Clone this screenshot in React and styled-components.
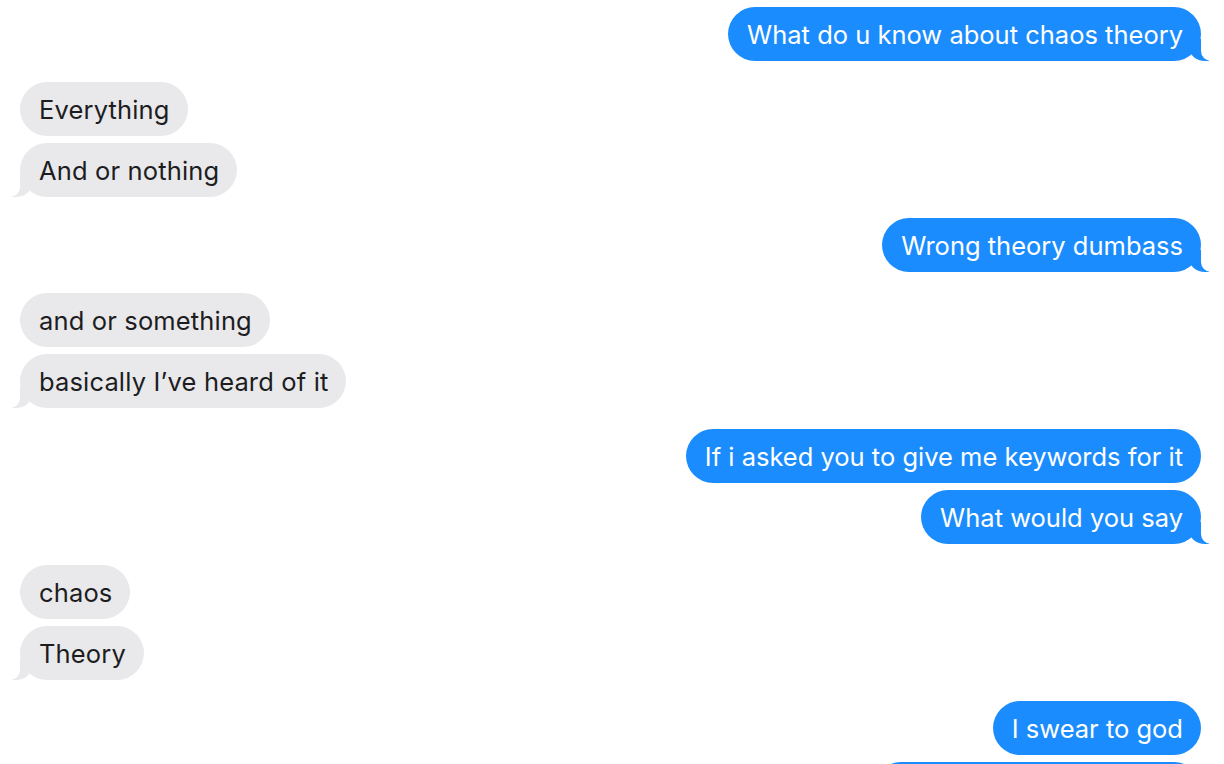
import React from "react";
import styled, { createGlobalStyle, css } from "styled-components";

const GlobalStyle = createGlobalStyle`
  html, body {
    margin: 0;
    padding: 0;
    background: #fff;
    overflow: hidden;
  }
  body {
    font-family: Inter, "Helvetica Neue", "Liberation Sans", sans-serif;
  }
`;

const Thread = styled.div`
  display: flex;
  flex-direction: column;
  padding: 7px 23px 0 20px;
  height: 764px;
  box-sizing: border-box;
`;

const Group = styled.div`
  display: flex;
  flex-direction: column;
  align-items: ${(p) => (p.$sent ? "flex-end" : "flex-start")};
  gap: 7px;
  & + & {
    margin-top: 21px;
  }
`;

const tailSent = css`
  &::before {
    content: "";
    position: absolute;
    z-index: 0;
    bottom: 0;
    right: -8px;
    width: 20px;
    height: 22px;
    background: #1b8cfe;
    border-bottom-left-radius: 16px 14px;
  }
  &::after {
    content: "";
    position: absolute;
    z-index: 1;
    bottom: 0;
    right: -14px;
    width: 14px;
    height: 22px;
    background: #fff;
    border-bottom-left-radius: 10px;
  }
`;

const tailReceived = css`
  &::before {
    content: "";
    position: absolute;
    z-index: 0;
    bottom: 0;
    left: -8px;
    width: 20px;
    height: 22px;
    background: #e9e9eb;
    border-bottom-right-radius: 16px 14px;
  }
  &::after {
    content: "";
    position: absolute;
    z-index: 1;
    bottom: 0;
    left: -14px;
    width: 14px;
    height: 22px;
    background: #fff;
    border-bottom-right-radius: 10px;
  }
`;

const Bubble = styled.div`
  position: relative;
  box-sizing: border-box;
  height: 54px;
  display: flex;
  align-items: center;
  padding: 0 18px 0 19px;
  border-radius: 27px;
  font-size: 25.5px;
  white-space: nowrap;
  background: ${(p) => (p.$sent ? "#1b8cfe" : "#e9e9eb")};
  color: ${(p) => (p.$sent ? "#fff" : "#1d1d1f")};
  letter-spacing: ${(p) => (p.$sent ? "0" : "0.15px")};
  ${(p) => p.$tail && (p.$sent ? tailSent : tailReceived)}
`;

const Text = styled.span`
  position: relative;
  z-index: 2;
`;

const groups = [
  { sent: true, lines: ["What do u know about chaos theory"] },
  { sent: false, lines: ["Everything", "And or nothing"] },
  { sent: true, lines: ["Wrong theory dumbass"] },
  { sent: false, lines: ["and or something", "basically I\u2019ve heard of it"] },
  { sent: true, lines: ["If i asked you to give me keywords for it", "What would you say"] },
  { sent: false, lines: ["chaos", "Theory"] },
  { sent: true, lines: ["I swear to god", "You\u2019re so annoying omg"] },
];

export default function App() {
  return (
    <>
      <GlobalStyle />
      <Thread>
        {groups.map((g, i) => (
          <Group key={i} $sent={g.sent}>
            {g.lines.map((line, j) => (
              <Bubble
                key={j}
                $sent={g.sent}
                $tail={j === g.lines.length - 1}
              >
                <Text>{line}</Text>
              </Bubble>
            ))}
          </Group>
        ))}
      </Thread>
    </>
  );
}
